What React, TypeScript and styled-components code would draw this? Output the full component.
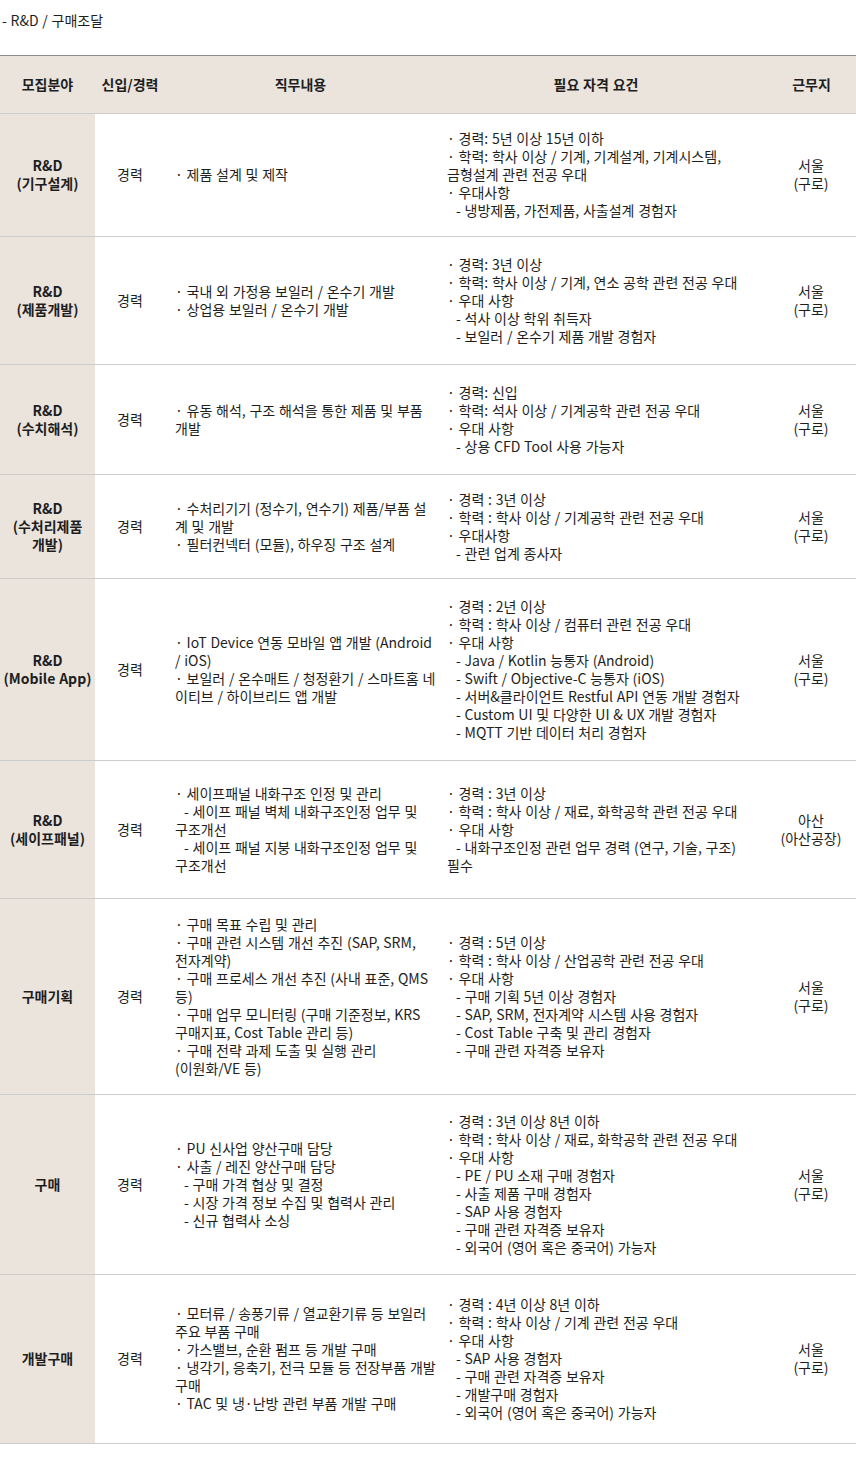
import React, { FC } from 'react';
import styled, { createGlobalStyle } from 'styled-components';

const GlobalStyle = createGlobalStyle`
  html, body {
    margin: 0;
    padding: 0;
    background: #ffffff;
  }
  body {
    font-family: 'Noto Sans CJK KR', 'Noto Sans', sans-serif;
    font-size: 14px;
    color: #1e1e1e;
  }
`;

interface IPosition {
  field: string[];
  type: string;
  duties: string[];
  reqs: string[];
  place: string[];
  height: number;
}

const positions: IPosition[] = [
  {
    field: ['R&D', '(기구설계)'],
    type: '경력',
    duties: ['· 제품 설계 및 제작'],
    reqs: [
      '· 경력: 5년 이상 15년 이하',
      '· 학력: 학사 이상 / 기계, 기계설계, 기계시스템,',
      '금형설계 관련 전공 우대',
      '· 우대사항',
      '- 냉방제품, 가전제품, 사출설계 경험자',
    ],
    place: ['서울', '(구로)'],
    height: 123,
  },
  {
    field: ['R&D', '(제품개발)'],
    type: '경력',
    duties: ['· 국내 외 가정용 보일러 / 온수기 개발', '· 상업용 보일러 / 온수기 개발'],
    reqs: [
      '· 경력: 3년 이상',
      '· 학력: 학사 이상 / 기계, 연소 공학 관련 전공 우대',
      '· 우대 사항',
      '- 석사 이상 학위 취득자',
      '- 보일러 / 온수기 제품 개발 경험자',
    ],
    place: ['서울', '(구로)'],
    height: 128,
  },
  {
    field: ['R&D', '(수치해석)'],
    type: '경력',
    duties: ['· 유동 해석, 구조 해석을 통한 제품 및 부품', '개발'],
    reqs: [
      '· 경력: 신입',
      '· 학력: 석사 이상 / 기계공학 관련 전공 우대',
      '· 우대 사항',
      '- 상용 CFD Tool 사용 가능자',
    ],
    place: ['서울', '(구로)'],
    height: 110,
  },
  {
    field: ['R&D', '(수처리제품', '개발)'],
    type: '경력',
    duties: [
      '· 수처리기기 (정수기, 연수기) 제품/부품 설',
      '계 및 개발',
      '· 필터컨넥터 (모듈), 하우징 구조 설계',
    ],
    reqs: [
      '· 경력 : 3년 이상',
      '· 학력 : 학사 이상 / 기계공학 관련 전공 우대',
      '· 우대사항',
      '- 관련 업계 종사자',
    ],
    place: ['서울', '(구로)'],
    height: 104,
  },
  {
    field: ['R&D', '(Mobile App)'],
    type: '경력',
    duties: [
      '· IoT Device 연동 모바일 앱 개발 (Android',
      '/ iOS)',
      '· 보일러 / 온수매트 / 청정환기 / 스마트홈 네',
      '이티브 / 하이브리드 앱 개발',
    ],
    reqs: [
      '· 경력 : 2년 이상',
      '· 학력 : 학사 이상 / 컴퓨터 관련 전공 우대',
      '· 우대 사항',
      '- Java / Kotlin 능통자 (Android)',
      '- Swift / Objective-C 능통자 (iOS)',
      '- 서버&클라이언트 Restful API 연동 개발 경험자',
      '- Custom UI 및 다양한 UI & UX 개발 경험자',
      '- MQTT 기반 데이터 처리 경험자',
    ],
    place: ['서울', '(구로)'],
    height: 182,
  },
  {
    field: ['R&D', '(세이프패널)'],
    type: '경력',
    duties: [
      '· 세이프패널 내화구조 인정 및 관리',
      '- 세이프 패널 벽체 내화구조인정 업무 및',
      '구조개선',
      '- 세이프 패널 지붕 내화구조인정 업무 및',
      '구조개선',
    ],
    reqs: [
      '· 경력 : 3년 이상',
      '· 학력 : 학사 이상 / 재료, 화학공학 관련 전공 우대',
      '· 우대 사항',
      '- 내화구조인정 관련 업무 경력 (연구, 기술, 구조)',
      '필수',
    ],
    place: ['아산', '(아산공장)'],
    height: 138,
  },
  {
    field: ['구매기획'],
    type: '경력',
    duties: [
      '· 구매 목표 수립 및 관리',
      '· 구매 관련 시스템 개선 추진 (SAP, SRM,',
      '전자계약)',
      '· 구매 프로세스 개선 추진 (사내 표준, QMS',
      '등)',
      '· 구매 업무 모니터링 (구매 기준정보, KRS',
      '구매지표, Cost Table 관리 등)',
      '· 구매 전략 과제 도출 및 실행 관리',
      '(이원화/VE 등)',
    ],
    reqs: [
      '· 경력 : 5년 이상',
      '· 학력 : 학사 이상 / 산업공학 관련 전공 우대',
      '· 우대 사항',
      '- 구매 기획 5년 이상 경험자',
      '- SAP, SRM, 전자계약 시스템 사용 경험자',
      '- Cost Table 구축 및 관리 경험자',
      '- 구매 관련 자격증 보유자',
    ],
    place: ['서울', '(구로)'],
    height: 196,
  },
  {
    field: ['구매'],
    type: '경력',
    duties: [
      '· PU 신사업 양산구매 담당',
      '· 사출 / 레진 양산구매 담당',
      '- 구매 가격 협상 및 결정',
      '- 시장 가격 정보 수집 및 협력사 관리',
      '- 신규 협력사 소싱',
    ],
    reqs: [
      '· 경력 : 3년 이상 8년 이하',
      '· 학력 : 학사 이상 / 재료, 화학공학 관련 전공 우대',
      '· 우대 사항',
      '- PE / PU 소재 구매 경험자',
      '- 사출 제품 구매 경험자',
      '- SAP 사용 경험자',
      '- 구매 관련 자격증 보유자',
      '- 외국어 (영어 혹은 중국어) 가능자',
    ],
    place: ['서울', '(구로)'],
    height: 180,
  },
  {
    field: ['개발구매'],
    type: '경력',
    duties: [
      '· 모터류 / 송풍기류 / 열교환기류 등 보일러',
      '주요 부품 구매',
      '· 가스밸브, 순환 펌프 등 개발 구매',
      '· 냉각기, 응축기, 전극 모듈 등 전장부품 개발',
      '구매',
      '· TAC 및 냉·난방 관련 부품 개발 구매',
    ],
    reqs: [
      '· 경력 : 4년 이상 8년 이하',
      '· 학력 : 학사 이상 / 기계 관련 전공 우대',
      '· 우대 사항',
      '- SAP 사용 경험자',
      '- 구매 관련 자격증 보유자',
      '- 개발구매 경험자',
      '- 외국어 (영어 혹은 중국어) 가능자',
    ],
    place: ['서울', '(구로)'],
    height: 169,
  },
];

const Wrap = styled.div`
  width: 856px;
  padding-bottom: 18px;
`;

const Title = styled.h3`
  margin: 0;
  height: 55px;
  box-sizing: border-box;
  padding: 11px 0 0 2px;
  font-size: 14px;
  font-weight: normal;
  line-height: 18px;
  word-spacing: 0.6px;
  color: #1e1e1e;
`;

const Table = styled.table`
  width: 856px;
  border-collapse: collapse;
  table-layout: fixed;
  border-top: 1px solid #8c8c8c;
  line-height: 18px;
  word-spacing: 0.6px;
`;

const HeadRow = styled.tr`
  height: 58px;
  background: #ebe4dd;
`;

const HeadCell = styled.th<{ $pad?: string }>`
  padding: ${(p) => p.$pad || '0 0 2px 0'};
  font-weight: bold;
  font-size: 14px;
  text-align: center;
  vertical-align: middle;
  border-bottom: 1px solid #cccccc;
  color: #1e1e1e;
`;

const Row = styled.tr<{ $h: number }>`
  height: ${(p) => p.$h}px;
`;

const FieldCell = styled.td`
  background: #ebe4dd;
  font-weight: bold;
  text-align: center;
  vertical-align: middle;
  border-bottom: 1px solid #cccccc;
  padding: 0 0 2px 0;
`;

const CenterCell = styled.td`
  text-align: center;
  vertical-align: middle;
  border-bottom: 1px solid #cccccc;
  padding: 0 0 2px 0;
`;

const TextCell = styled.td<{ $pad: string }>`
  text-align: left;
  vertical-align: middle;
  border-bottom: 1px solid #cccccc;
  padding: ${(p) => p.$pad};
`;

const Line = styled.div<{ $sub: boolean }>`
  white-space: nowrap;
  padding-left: ${(p) => (p.$sub ? '9px' : '0')};
`;

const Lines: FC<{ items: string[] }> = ({ items }) => (
  <>
    {items.map((t, i) => (
      <Line key={i} $sub={t.startsWith('-')}>
        {t}
      </Line>
    ))}
  </>
);

const Stack: FC<{ items: string[] }> = ({ items }) => (
  <>
    {items.map((t, i) => (
      <div key={i}>{t}</div>
    ))}
  </>
);

const App: FC = () => {
  return (
    <Wrap>
      <GlobalStyle />
      <Title>- R&amp;D / 구매조달</Title>
      <Table>
        <colgroup>
          <col style={{ width: 95 }} />
          <col style={{ width: 70 }} />
          <col style={{ width: 275 }} />
          <col style={{ width: 326 }} />
          <col style={{ width: 90 }} />
        </colgroup>
        <thead>
          <HeadRow>
            <HeadCell>모집분야</HeadCell>
            <HeadCell>신입/경력</HeadCell>
            <HeadCell $pad="0 4px 2px 0">직무내용</HeadCell>
            <HeadCell $pad="0 14px 2px 0">필요 자격 요건</HeadCell>
            <HeadCell $pad="0 0 2px 1px">근무지</HeadCell>
          </HeadRow>
        </thead>
        <tbody>
          {positions.map((p, i) => (
            <Row key={i} $h={p.height}>
              <FieldCell>
                <Stack items={p.field} />
              </FieldCell>
              <CenterCell>{p.type}</CenterCell>
              <TextCell $pad="0 4px 2px 10px">
                <Lines items={p.duties} />
              </TextCell>
              <TextCell $pad="0 10px 2px 7px">
                <Lines items={p.reqs} />
              </TextCell>
              <CenterCell>
                <Stack items={p.place} />
              </CenterCell>
            </Row>
          ))}
        </tbody>
      </Table>
    </Wrap>
  );
};

export default App;
